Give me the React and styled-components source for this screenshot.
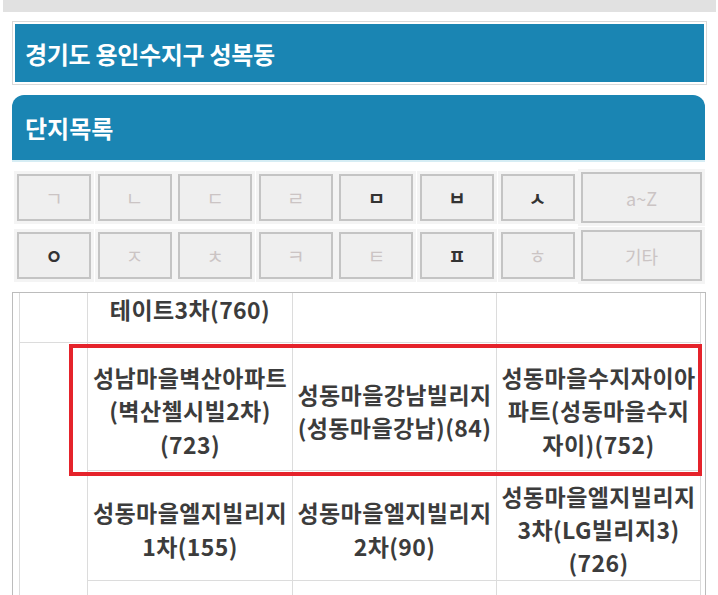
import React from 'react';
import styled, { createGlobalStyle } from 'styled-components';

const GlobalStyle = createGlobalStyle`
  html, body {
    margin: 0;
    padding: 0;
    background: #ffffff;
    overflow: hidden;
  }
  body {
    font-family: "Noto Sans CJK KR", "Noto Sans", sans-serif;
  }
`;

const Page = styled.div`
  height: 595px;
  display: flex;
  flex-direction: column;
`;

const TopBar = styled.div`
  height: 12px;
  margin: 0 2px 0 3px;
  background: #e1e1e1;
  flex-shrink: 0;
`;

const Content = styled.div`
  flex: 1;
  display: flex;
  flex-direction: column;
  padding: 0 12px;
  min-height: 0;
`;

const RegionHeader = styled.div`
  margin: 9px -1px 0 0;
  border: 1px solid #d9d9d9;
  padding: 2px;
`;

const RegionTitle = styled.h1`
  margin: 0;
  height: 58px;
  display: flex;
  align-items: center;
  padding-left: 10px;
  background: #1a85b3;
  color: #ffffff;
  font-size: 24px;
  font-weight: 700;
  letter-spacing: -0.3px;
`;

const ListHeader = styled.h2`
  margin: 10px 1px 0 0;
  height: 65px;
  display: flex;
  align-items: center;
  padding-left: 13px;
  background: #1a85b3;
  border-radius: 12px 12px 0 0;
  border-bottom: 2px solid #d6edf4;
  color: #ffffff;
  font-size: 24px;
  font-weight: 700;
`;

const Keyboard = styled.div`
  margin-top: 10px;
  padding: 0 4px 0 5px;
  display: grid;
  grid-template-columns: repeat(7, 74px) 1fr;
  grid-auto-rows: 51px;
  column-gap: 6.6px;
  row-gap: 7px;
`;

const Key = styled.button`
  align-self: center;
  height: ${p => (p.$wide ? '51px' : '47px')};
  margin: 0;
  padding: 0;
  background: #efefef;
  border: 2px solid #c4c4c4;
  box-shadow: 0 0 0 3px #f4f4f4;
  font-family: inherit;
  font-size: ${p => (p.$wide ? '18px' : '19px')};
  font-weight: ${p => (p.$active ? 700 : 400)};
  color: ${p => (p.$active ? '#333333' : '#cbc4c4')};
  cursor: pointer;
`;

const TableBox = styled.div`
  position: relative;
  margin-top: 11px;
  flex: 1;
  min-height: 0;
  border: 1px solid #bcbcbc;
  border-bottom: none;
  padding: 0 4px 0 6px;
  overflow: hidden;
`;

const Table = styled.table`
  width: 100%;
  table-layout: fixed;
  border-collapse: collapse;
  border-left: 1px solid #dcdcdc;
  border-right: 1px solid #dcdcdc;
`;

const Cell = styled.td`
  height: ${p => p.$height}px;
  padding: ${p => p.$top}px 0 0;
  vertical-align: ${p => (p.$alignTop ? 'top' : 'middle')};
  text-align: center;
  border-right: 1px solid #dcdcdc;
  border-bottom: ${p => (p.$noBottom ? 'none' : '1px solid #dcdcdc')};
  color: #3c3c3c;
  font-size: 23px;
  font-weight: 700;
  line-height: 33.4px;
  letter-spacing: 0.4px;
  white-space: nowrap;
  box-sizing: border-box;
`;

const Line = styled.span`
  display: block;
`;

const Highlight = styled.div`
  position: absolute;
  left: 56px;
  top: 51px;
  width: 633px;
  height: 132px;
  border: 4px solid #e5232b;
  box-sizing: border-box;
  pointer-events: none;
`;

const keys = [
  { label: 'ㄱ' }, { label: 'ㄴ' }, { label: 'ㄷ' }, { label: 'ㄹ' },
  { label: 'ㅁ', active: true }, { label: 'ㅂ', active: true }, { label: 'ㅅ', active: true },
  { label: 'a~Z', wide: true },
  { label: 'ㅇ', active: true }, { label: 'ㅈ' }, { label: 'ㅊ' }, { label: 'ㅋ' },
  { label: 'ㅌ' }, { label: 'ㅍ', active: true }, { label: 'ㅎ' },
  { label: '기타', wide: true },
];

const rows = [
  {
    height: 49,
    top: 0,
    alignTop: true,
    cells: [['테이트3차(760)'], [], []],
  },
  {
    height: 128,
    top: 10,
    cells: [
      ['성남마을벽산아파트', '(벽산첼시빌2차)', '(723)'],
      ['성동마을강남빌리지', '(성동마을강남)(84)'],
      ['성동마을수지자이아', '파트(성동마을수지', '자이)(752)'],
    ],
  },
  {
    height: 110,
    top: 9,
    cells: [
      ['성동마을엘지빌리지', '1차(155)'],
      ['성동마을엘지빌리지', '2차(90)'],
      ['성동마을엘지빌리지', '3차(LG빌리지3)', '(726)'],
    ],
  },
  {
    height: 60,
    top: 0,
    cells: [[], [], []],
  },
];

const App = () => {
  return (
    <Page>
      <GlobalStyle />
      <TopBar />
      <Content>
        <RegionHeader>
          <RegionTitle>경기도 용인수지구 성복동</RegionTitle>
        </RegionHeader>
        <ListHeader>단지목록</ListHeader>
        <Keyboard>
          {keys.map(k => (
            <Key key={k.label} $active={k.active} $wide={k.wide}>
              {k.label}
            </Key>
          ))}
        </Keyboard>
        <TableBox>
          <Table>
            <colgroup>
              <col style={{ width: 68 }} />
              <col style={{ width: 205 }} />
              <col style={{ width: 204 }} />
              <col style={{ width: 204 }} />
            </colgroup>
            <tbody>
              {rows.map((row, i) => (
                <tr key={i}>
                  {i === 0 && <Cell $height={row.height} $top={0} />}
                  {i === 1 && <Cell rowSpan={3} $noBottom $top={0} />}
                  {row.cells.map((lines, j) => (
                    <Cell
                      key={j}
                      $height={row.height}
                      $top={row.top}
                      $alignTop={row.alignTop}
                    >
                      {lines.map(l => (
                        <Line key={l}>{l}</Line>
                      ))}
                    </Cell>
                  ))}
                </tr>
              ))}
            </tbody>
          </Table>
          <Highlight />
        </TableBox>
      </Content>
    </Page>
  );
};

export default App;
